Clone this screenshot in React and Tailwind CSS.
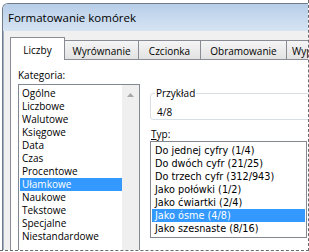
import React from "react";

const cats = ["Ogólne","Liczbowe","Walutowe","Księgowe","Data","Czas","Procentowe","Ułamkowe","Naukowe","Tekstowe","Specjalne","Niestandardowe"];
const types = ["Do jednej cyfry (1/4)","Do dwóch cyfr (21/25)","Do trzech cyfr (312/943)","Jako połówki (1/2)","Jako ćwiartki (2/4)","Jako ósme (4/8)","Jako szesnaste (8/16)"];

export default function App() {
  return (
    <div className="w-[309px] h-[252px] bg-white overflow-hidden font-['Open_Sans',sans-serif] text-black">
      <div className="w-[309px] h-[251px] border-r border-b border-dashed border-[#6a6a6a] overflow-hidden pt-[3px] pl-[2px]">
        <div className="w-[330px] h-[260px] rounded-tl-[6px] border-l border-t border-[#707c8a] flex flex-col overflow-hidden">
          <div className="h-[27px] shrink-0 bg-gradient-to-b from-[#b7cee8] to-[#d6e4f3] pl-[5px] flex items-center text-[11.5px] leading-none">
            Formatowanie komórek
          </div>
          <div className="flex-1 bg-[#f0f0f0] border-l border-[#9fb0c2] pl-[6px] pt-[6px] flex flex-col text-[10px]">
            <div className="flex items-end h-[23px] -mb-px relative z-10">
              <div className="w-[55px] shrink-0 h-[23px] bg-white border border-b-0 border-[#898c95] flex justify-center pt-[5px]">Liczby</div>
              <div className="w-[75px] shrink-0 h-[20px] -ml-px bg-gradient-to-b from-[#f5f5f5] to-[#e2e2e2] border border-[#898c95] flex justify-center pt-[3px]">Wyrównanie</div>
              <div className="w-[63px] shrink-0 h-[20px] -ml-px bg-gradient-to-b from-[#f5f5f5] to-[#e2e2e2] border border-[#898c95] flex justify-center pt-[3px]">Czcionka</div>
              <div className="w-[87px] shrink-0 h-[20px] -ml-px bg-gradient-to-b from-[#f5f5f5] to-[#e2e2e2] border border-[#898c95] flex justify-center pt-[3px]">Obramowanie</div>
              <div className="w-[75px] shrink-0 h-[20px] -ml-px bg-gradient-to-b from-[#f5f5f5] to-[#e2e2e2] border border-[#898c95] flex pl-[5px] pt-[3px]">Wypełnienie</div>
            </div>
            <div className="flex-1 bg-white border border-[#898c95] flex">
              <div className="pl-[7px] pt-[9px] w-[138px] shrink-0">
                <div className="h-[13px] leading-[13px]">Kategoria:</div>
                <div className="mt-[2px] w-[122px] h-[180px] border border-[#828790] flex">
                  <div className="flex-1 pt-[2px] pl-[1px]">
                    {cats.map((c) => (
                      <div key={c} className={"h-[13px] leading-[13px] pl-[2px] " + (c === "Ułamkowe" ? "bg-[#3399ff] text-white" : "")}>{c}</div>
                    ))}
                  </div>
                  <div className="w-[17px] bg-[#efefef] flex flex-col items-center pt-[8px]">
                    <svg width="7" height="4" viewBox="0 0 7 4"><path d="M0 4 L3.5 0 L7 4 Z" fill="#a8a8a8" /></svg>
                  </div>
                </div>
              </div>
              <div className="pl-[1px] w-[160px] shrink-0">
                <div className="mt-[33px] relative h-[27px] w-[180px] border border-[#d5dfe5] rounded-[3px]">
                  <div className="absolute -top-[7px] left-[4px] bg-white px-[1px] h-[13px] leading-[13px]">Przykład</div>
                  <div className="pl-[6px] pt-[12px] h-[13px] leading-[13px]">4/8</div>
                </div>
                <div className="mt-[8px] h-[13px] leading-[13px] pl-[1px]"><span className="underline">T</span>yp:</div>
                <div className="w-[157px] h-[97px] border border-[#828790] pt-[2px] font-['DejaVu_Sans',sans-serif] text-[9.7px]">
                  {types.map((t) => (
                    <div key={t} className={"h-[13px] leading-[13px] pl-[3px] ml-[1px] mr-[1px] " + (t === "Jako ósme (4/8)" ? "bg-[#3399ff] text-white" : "")}>{t}</div>
                  ))}
                </div>
              </div>
            </div>
          </div>
        </div>
      </div>
    </div>
  );
}
